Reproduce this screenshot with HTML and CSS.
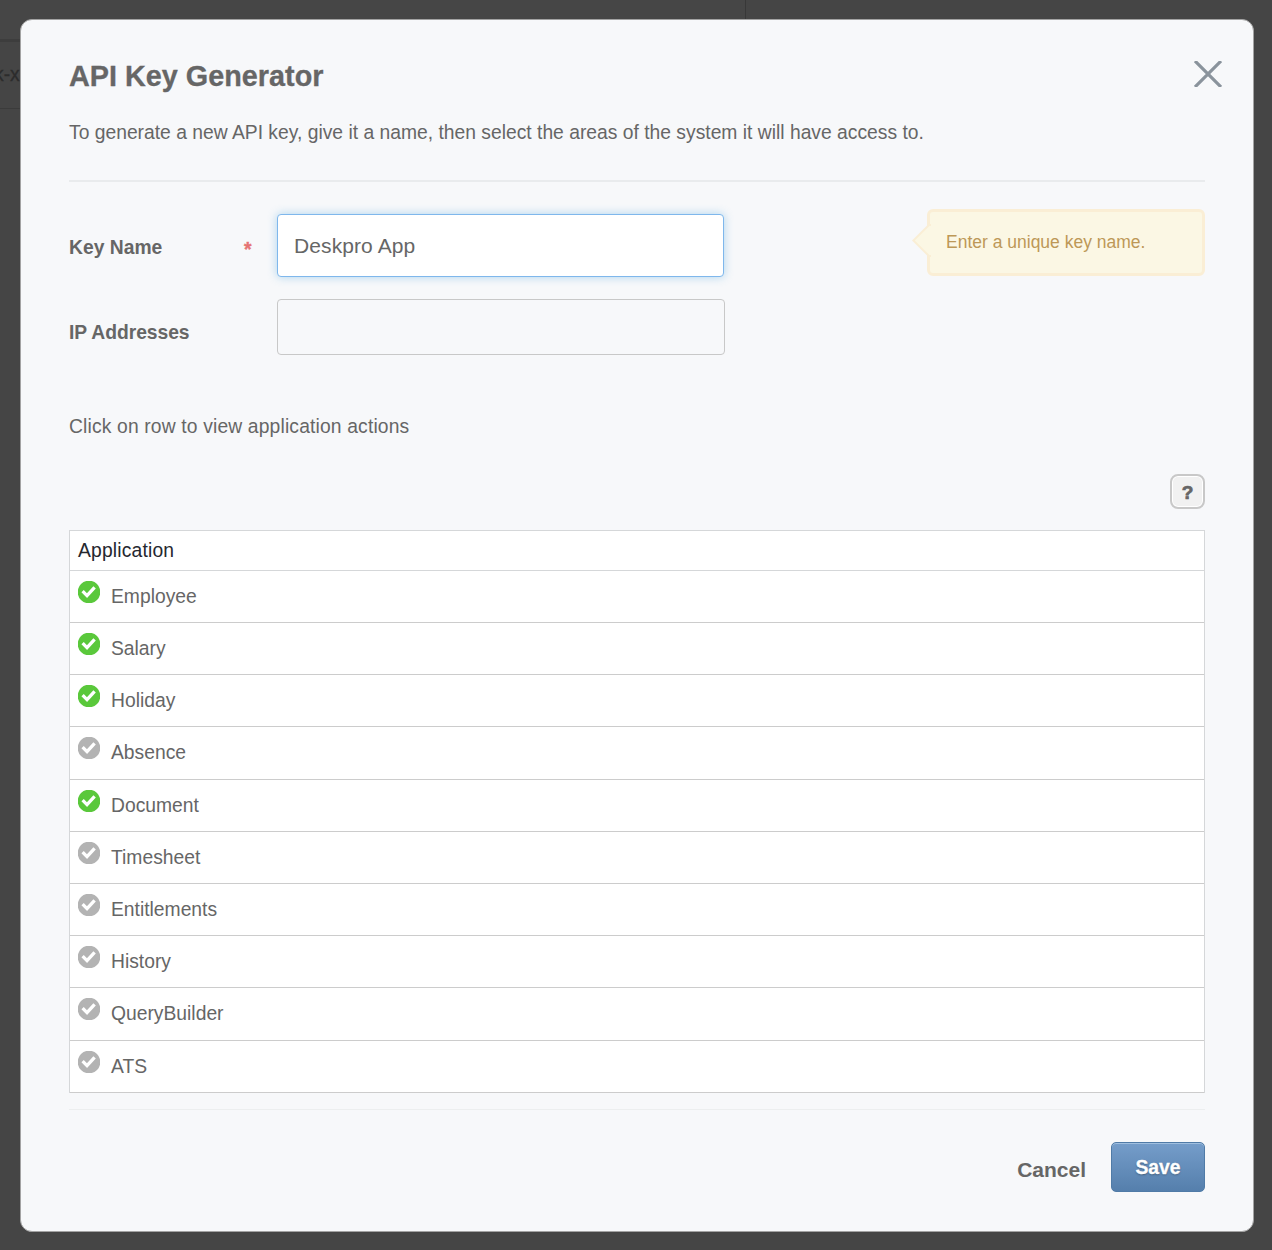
FILE: index.html
```html
<!DOCTYPE html>
<html lang="en">
<head>
<meta charset="utf-8">
<title>API Key Generator</title>
<link rel="stylesheet" href="styles.css">
</head>
<body>
<svg class="defs" width="0" height="0" aria-hidden="true">
  <symbol id="check" viewBox="0 0 22 22">
    <circle cx="11" cy="11" r="11.3"/>
    <path d="M4.6 10.2 9 14.6 16.6 6.4" fill="none" stroke="#fff" stroke-width="3.3"/>
  </symbol>
</svg>
<div class="backdrop" aria-hidden="true">
  <div class="backdrop-top"></div>
  <div class="backdrop-row">k-x</div>
</div>
<main class="dialog">
  <header class="header">
    <div class="title-row">
      <h1 class="title">API Key Generator</h1>
      <button class="close" aria-label="Close">
        <svg width="28" height="26" viewBox="0 0 28 26"><path d="M1 0 27 26M27 0 1 26" fill="none" stroke="#8a939c" stroke-width="3.2"/></svg>
      </button>
    </div>
    <p class="intro">To generate a new API key, give it a name, then select the areas of the system it will have access to.</p>
  </header>
  <section class="form">
    <div class="field field-name">
      <label class="label" for="name">Key Name</label>
      <span class="required">*</span>
      <input class="input input-active" id="name" value="Deskpro App">
      <div class="hint">
        <svg class="hint-arrow" width="19" height="34" viewBox="0 0 19 34"><path d="M19 1 17 1 1.3 16.5 17 32 19 32" fill="#fbf7e4" stroke="#faeed5" stroke-width="2"/></svg>
        Enter a unique key name.
      </div>
    </div>
    <div class="field field-ip">
      <label class="label" for="ip">IP Addresses</label>
      <span class="required"></span>
      <input class="input" id="ip">
    </div>
  </section>
  <p class="note">Click on row to view application actions</p>
  <div class="help-row"><button class="help">?</button></div>
  <div class="table">
    <div class="thead">Application</div>
    <div class="row"><svg class="tick on"><use href="#check"/></svg><span>Employee</span></div>
    <div class="row"><svg class="tick on"><use href="#check"/></svg><span>Salary</span></div>
    <div class="row"><svg class="tick on"><use href="#check"/></svg><span>Holiday</span></div>
    <div class="row"><svg class="tick"><use href="#check"/></svg><span>Absence</span></div>
    <div class="row"><svg class="tick on"><use href="#check"/></svg><span>Document</span></div>
    <div class="row"><svg class="tick"><use href="#check"/></svg><span>Timesheet</span></div>
    <div class="row"><svg class="tick"><use href="#check"/></svg><span>Entitlements</span></div>
    <div class="row"><svg class="tick"><use href="#check"/></svg><span>History</span></div>
    <div class="row"><svg class="tick"><use href="#check"/></svg><span>QueryBuilder</span></div>
    <div class="row"><svg class="tick"><use href="#check"/></svg><span>ATS</span></div>
  </div>
  <footer class="footer">
    <button class="cancel">Cancel</button>
    <button class="save">Save</button>
  </footer>
</main>
</body>
</html>
```
FILE: styles.css
```css
* { box-sizing: border-box; }
body {
  margin: 0;
  height: 1250px;
  padding: 19px 18px 18px 20px;
  overflow: hidden;
  background: #454545;
  color: #666;
  font: 19.3px/24px "Liberation Sans", Arial, sans-serif;
}
h1, p { margin: 0; }
button, input { font: inherit; color: inherit; margin: 0; padding: 0; border: 0; background: none; }
.defs { position: absolute; }

/* Dimmed page behind the dialog */
.backdrop { position: absolute; inset: 0; }
.backdrop-top { width: 746px; height: 42px; border-right: 1px solid #383838; border-bottom: 3px solid #3d3d3d; background: #464646; }
.backdrop-row { width: 30px; height: 67px; padding-top: 20px; border-bottom: 1px solid #3b3b3b; color: #2c2c2c; line-height: 26px; text-indent: -6px; -webkit-text-stroke: .3px #2c2c2c; }

.dialog {
  position: relative;
  height: 1213px;
  padding: 0 48px;
  border: 1px solid #a3a3a3;
  border-radius: 12px;
  background: #f7f8fa;
}
.header { height: 162px; border-bottom: 2px solid #e9ebed; }
.title-row { display: flex; justify-content: space-between; padding-top: 38px; height: 80px; margin-right: -17px; }
.title { font-size: 28.8px; line-height: 36px; font-weight: bold; -webkit-text-stroke: .3px #666; }
.close { display: flex; height: 26px; margin-top: 3px; }
.intro { padding-top: 21px; white-space: nowrap; }

.form { padding-top: 27px; height: 192px; }
.field { display: flex; }
.field-name { height: 90px; }
.label { width: 175px; font-weight: bold; padding-top: 27px; }
.field-ip .label { padding-top: 22px; letter-spacing: -.05px; }
.required { width: 33px; padding-top: 29px; color: #e57373; font-weight: bold; -webkit-text-stroke: .4px #e57373; }
.input { width: 448px; height: 56px; border: 1px solid #c8c8c8; border-radius: 4px; padding: 0 16px; font-size: 21px; outline: none; }
.input-active { width: 447px; height: 63px; margin-top: 5px; background: #fff; border-color: #7fb7ec; box-shadow: 0 0 10px rgba(82,168,225,.45); letter-spacing: .1px; }
.hint { position: relative; width: 278px; height: 67px; margin-left: auto; padding: 18px 16px; border: 3px solid #faeed5; border-radius: 6px; background: #fbf7e4; color: #bd9857; font-size: 17.5px; line-height: 24px; }
.hint-arrow { position: absolute; left: -18px; top: 12px; }
.note { height: 100px; padding-top: 41px; letter-spacing: .15px; }
.help-row { display: flex; justify-content: flex-end; height: 56px; }
.help { width: 35px; height: 35px; border: 2px solid #c8c8c8; border-radius: 8px; background: #f1f1f1; box-shadow: inset 0 0 0 1px #fff; font-weight: bold; font-size: 19px; line-height: 32px; padding-top: 1px; -webkit-text-stroke: .7px #666; }

.table { background: #fff; border: 1px solid #d5d7d9; border-bottom: 0; }
.thead { height: 39.9px; padding: 8px 8px 6px; border-bottom: 1px solid #d5d7d9; color: #25272f; letter-spacing: .17px; }
.row { display: flex; height: 52.2px; padding-left: 8px; border-bottom: 1px solid #ccc; }
.tick { width: 22px; height: 22px; margin: 10px 11px 0 0; fill: #b3b3b3; }
.tick.on { fill: #5ac83b; }
.row span { padding-top: 14px; }
.footer { display: flex; justify-content: flex-end; margin-top: 16px; padding-top: 32px; border-top: 1px solid #eceeef; }
.cancel { font-size: 21px; font-weight: bold; height: 56px; margin-right: 25px; }
.save { width: 94px; height: 50px; padding-top: 2px; border: 1px solid #507ba7; border-radius: 5px; background: linear-gradient(#759dca, #557fac); box-shadow: inset 0 1px 0 #a0bfdf; color: #fff; font-weight: bold; text-shadow: 0 1px 2px rgba(0,0,0,.35); -webkit-text-stroke: .3px #fff; }
```
